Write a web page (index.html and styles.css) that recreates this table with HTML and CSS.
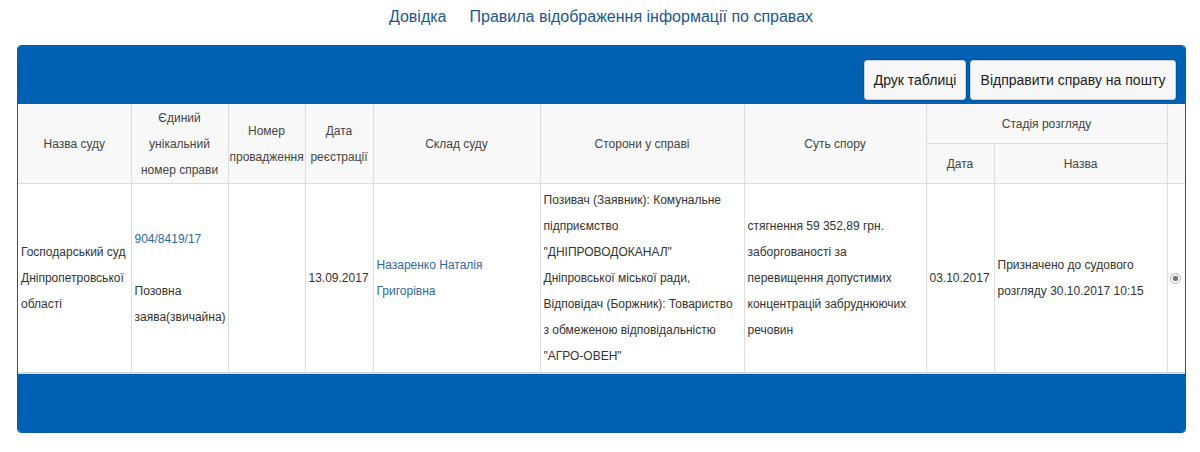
FILE: index.html
```html
<!DOCTYPE html>
<html lang="uk">
<head>
<meta charset="utf-8">
<link rel="stylesheet" href="styles.css">
</head>
<body>
<nav class="topnav">
  <a href="#">Довідка</a>
  <a href="#">Правила відображення інформації по справах</a>
</nav>
<div class="panel">
  <div class="panel-head">
    <button class="btn">Друк таблиці</button>
    <button class="btn">Відправити справу на пошту</button>
  </div>
  <table class="cases">
    <colgroup>
      <col class="c1"><col class="c2"><col class="c3"><col class="c4"><col class="c5">
      <col class="c6"><col class="c7"><col class="c8"><col class="c9"><col class="c10">
    </colgroup>
    <thead>
      <tr>
        <th rowspan="2">Назва суду</th>
        <th rowspan="2">Єдиний унікальний номер справи</th>
        <th rowspan="2">Номер провадження</th>
        <th rowspan="2">Дата реєстрації</th>
        <th rowspan="2">Склад суду</th>
        <th rowspan="2">Сторони у справі</th>
        <th rowspan="2">Суть спору</th>
        <th colspan="2" class="stage">Стадія розгляду</th>
        <th rowspan="2"></th>
      </tr>
      <tr>
        <th class="stage">Дата</th>
        <th class="stage">Назва</th>
      </tr>
    </thead>
    <tbody>
      <tr>
        <td>Господарський суд Дніпропетровської області</td>
        <td><a href="#">904/8419/17</a><br><br>Позовна заява(звичайна)</td>
        <td></td>
        <td class="right">13.09.2017</td>
        <td><a href="#">Назаренко Наталія Григорівна</a></td>
        <td>Позивач (Заявник): Комунальне підприємство "ДНІПРОВОДОКАНАЛ" Дніпровської міської ради, Відповідач (Боржник): Товариство з обмеженою відповідальністю "АГРО-ОВЕН"</td>
        <td>стягнення 59 352,89 грн. заборгованості за перевищення допустимих концентрацій забруднюючих речовин</td>
        <td>03.10.2017</td>
        <td>Призначено до судового розгляду 30.10.2017 10:15</td>
        <td class="radio-cell"><span class="radio"></span></td>
      </tr>
    </tbody>
  </table>
  <div class="panel-foot"></div>
</div>
</body>
</html>
```

FILE: styles.css
```css
html, body {
  margin: 0;
  padding: 0;
  background: #fff;
  font-family: "Liberation Sans", Arial, Helvetica, sans-serif;
  color: #333;
}

.topnav {
  height: 45px;
  display: flex;
  justify-content: center;
  align-items: flex-start;
  gap: 23px;
  padding-left: 2px;
  box-sizing: border-box;
}

.topnav a {
  font-size: 16px;
  line-height: 18px;
  margin-top: 8px;
  color: #1a5796;
  text-decoration: none;
}

.panel {
  margin-left: 17px;
  width: 1169px;
  border: 1px solid #0a5ea8;
  border-radius: 4px;
  box-sizing: border-box;
  overflow: hidden;
  background: #fff;
}

.panel-head {
  height: 58px;
  background: #0061b3;
  display: flex;
  justify-content: flex-end;
  align-items: flex-start;
  gap: 4px;
  padding: 14px 9px 0 0;
  box-sizing: border-box;
}

.btn {
  height: 40px;
  padding: 0 8px;
  font-family: "Liberation Sans", Arial, Helvetica, sans-serif;
  font-size: 14px;
  color: #222;
  background: #f7f7f7;
  border: 1px solid #c8d2dd;
  border-radius: 3px;
  box-shadow: 0 0 2px rgba(0, 0, 0, 0.35);
}

.btn:first-child {
  width: 102px;
}

.btn:nth-child(2) {
  width: 206px;
}

.cases {
  width: 100%;
  border-collapse: collapse;
  table-layout: fixed;
  font-size: 12px;
  line-height: 26px;
}

.c1 { width: 113px; }
.c2 { width: 97px; }
.c3 { width: 77px; }
.c4 { width: 68px; }
.c5 { width: 167px; }
.c6 { width: 204px; }
.c7 { width: 182px; }
.c8 { width: 68px; }
.c9 { width: 173px; }
.c10 { width: 19px; }

.cases th {
  background: #f8f8f8;
  color: #444;
  font-weight: normal;
  border: 1px solid #ddd;
  padding: 0 1px;
  text-align: center;
  vertical-align: middle;
  height: 39px;
}

.cases thead tr:first-child th {
  border-top: none;
}

.cases th:first-child,
.cases td:first-child {
  border-left: none;
}

.cases tr > th:last-child,
.cases tr > td:last-child {
  border-right: none;
}

.cases thead tr:nth-child(2) th:last-child {
  border-right: 1px solid #ddd;
}

.cases td {
  border: 1px solid #ddd;
  border-bottom: 2px solid #d4dbe3;
  padding: 3px 4px 3px 3px;
  vertical-align: middle;
  text-align: left;
  height: 182px;
}

.cases td.right {
  text-align: right;
}

.cases td a {
  color: #2d6aa3;
  text-decoration: none;
}

.cases td.radio-cell {
  padding: 3px 0 3px 2px;
}

.radio {
  display: inline-block;
  width: 9px;
  height: 9px;
  border: 1px solid #bbb;
  border-radius: 50%;
  background: radial-gradient(circle, #777 0, #777 2.2px, #f2f2f2 3px);
  vertical-align: middle;
}

.panel-foot {
  height: 58px;
  background: #0061b3;
}
```
